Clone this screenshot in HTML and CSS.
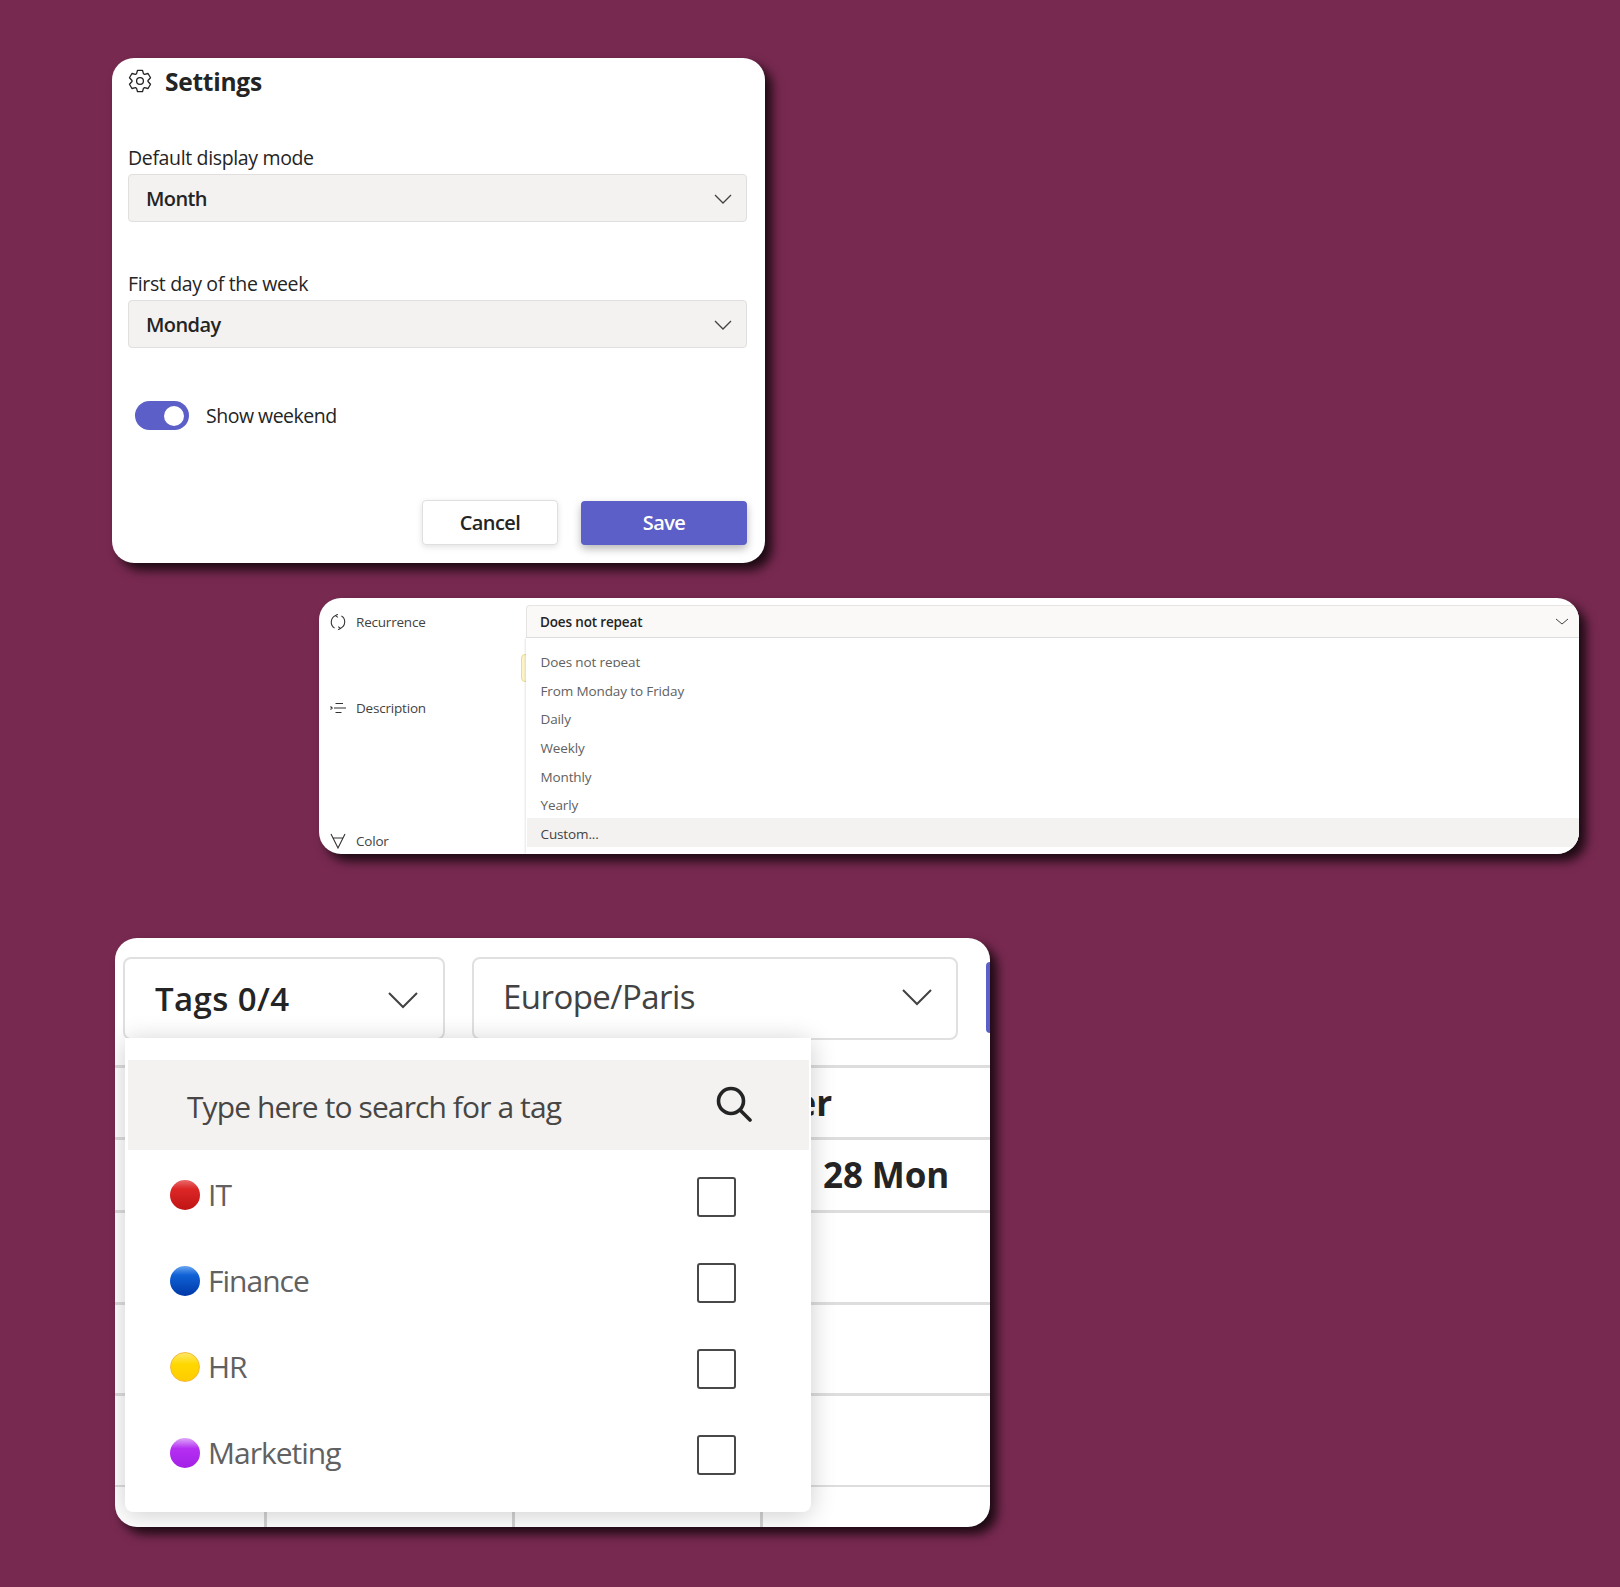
FILE: index.html
```html
<!DOCTYPE html>
<html lang="en">
<head>
    <meta charset="UTF-8">
    <title>Calendar settings</title>
    <link rel="stylesheet" href="styles.css">
</head>
<body>
    <section class="panel settings">
        <header class="settings-head">
            <svg class="gear" viewBox="0 0 24 24">
                <polygon points="9.53,1.29 14.47,1.29 15.5,4.81 16.47,5.37 20.04,4.5 22.52,8.78 19.98,11.44 19.98,12.56 22.52,15.22 20.04,19.5 16.47,18.63 15.5,19.19 14.47,22.71 9.53,22.71 8.49,19.19 7.53,18.63 3.96,19.5 1.48,15.22 4.02,12.56 4.02,11.44 1.48,8.78 3.96,4.5 7.53,5.37 8.49,4.81"/>
                <circle cx="12" cy="12" r="3.4"/>
            </svg>
            <h1>Settings</h1>
        </header>

        <div class="field field-mode">
            <label>Default display mode</label>
            <div class="select">
                <span>Month</span>
                <svg class="chevron chevron-md" viewBox="0 0 18 10"><polyline points="1,1 9,9 17,1"/></svg>
            </div>
        </div>

        <div class="field field-day">
            <label>First day of the week</label>
            <div class="select">
                <span>Monday</span>
                <svg class="chevron chevron-md" viewBox="0 0 18 10"><polyline points="1,1 9,9 17,1"/></svg>
            </div>
        </div>

        <div class="toggle-row">
            <div class="toggle"><div class="knob"></div></div>
            <span>Show weekend</span>
        </div>

        <div class="actions">
            <button class="btn btn-cancel">Cancel</button>
            <button class="btn btn-save">Save</button>
        </div>
    </section>

    <section class="panel recurrence">
        <div class="side">
            <div class="side-row row-recurrence">
                <svg class="side-icon" viewBox="0 0 16 16">
                    <path d="M5.8 1.6A7 7 0 0 0 4.6 14.1"/>
                    <path d="M10.2 14.4A7 7 0 0 0 11.4 1.9"/>
                    <path d="M7.8 0.2 5.6 1.6 7.8 3.4"/>
                    <path d="M8.2 12.6 10.4 14.4 8.2 15.8"/>
                </svg>
                <span>Recurrence</span>
            </div>
            <div class="side-row row-description">
                <svg class="side-icon" viewBox="0 0 16 16">
                    <path d="M0.5 6.5 2.2 8 0.5 9.5"/>
                    <path d="M5.5 3.5H13M4 8H16M5.5 12.5H11.5"/>
                </svg>
                <span>Description</span>
            </div>
            <div class="side-row row-color">
                <svg class="side-icon" viewBox="0 0 16 16">
                    <path d="M1 1 8 15 15 1M3 5H13"/>
                </svg>
                <span>Color</span>
            </div>
        </div>

        <div class="note"></div>

        <div class="repeat">
            <div class="repeat-select">
                <span>Does not repeat</span>
                <svg class="chevron chevron-sm" viewBox="0 0 14 7"><polyline points="1,1 7,6 13,1"/></svg>
            </div>
            <ul class="repeat-menu">
                <li class="clipped">Does not repeat</li>
                <li>From Monday to Friday</li>
                <li>Daily</li>
                <li>Weekly</li>
                <li>Monthly</li>
                <li>Yearly</li>
                <li class="hovered">Custom...</li>
            </ul>
        </div>
    </section>

    <section class="panel tags">
        <div class="toolbar">
            <div class="drop drop-tags">
                <span>Tags 0/4</span>
                <svg class="chevron chevron-lg" viewBox="0 0 30 17"><polyline points="1,1 15,15 29,1"/></svg>
            </div>
            <div class="drop drop-zone">
                <span>Europe/Paris</span>
                <svg class="chevron chevron-lg" viewBox="0 0 30 17"><polyline points="1,1 15,15 29,1"/></svg>
            </div>
            <div class="toolbar-btn"></div>
        </div>

        <div class="cal">
            <div class="cal-row cal-month">October</div>
            <div class="cal-row cal-day">28 Mon</div>
            <div class="cal-row cal-slot"></div>
            <div class="cal-row cal-slot"></div>
            <div class="cal-row cal-slot"></div>
            <div class="cal-foot">
                <div></div><div></div><div></div><div></div>
            </div>
        </div>

        <div class="tag-popup">
            <div class="tag-search">
                <span>Type here to search for a tag</span>
                <svg class="search-icon" viewBox="0 0 36 36">
                    <circle cx="15" cy="15" r="12.5"/>
                    <path d="M24 24 34 34"/>
                </svg>
            </div>
            <div class="tag-row">
                <div class="tag-name"><i class="dot dot-red"></i>IT</div>
                <div class="check"></div>
            </div>
            <div class="tag-row">
                <div class="tag-name"><i class="dot dot-blue"></i>Finance</div>
                <div class="check"></div>
            </div>
            <div class="tag-row">
                <div class="tag-name"><i class="dot dot-yellow"></i>HR</div>
                <div class="check"></div>
            </div>
            <div class="tag-row">
                <div class="tag-name"><i class="dot dot-purple"></i>Marketing</div>
                <div class="check"></div>
            </div>
        </div>
    </section>
</body>
</html>
```

FILE: styles.css
```css
* {
    box-sizing: border-box;
}

body {
    margin: 0;
    padding-top: 58px;
    height: 1587px;
    overflow: hidden;
    background-color: #782950;
    font-family: "Open Sans", "Noto Sans", sans-serif;
    color: #242424;
}

.panel {
    background-color: #ffffff;
    border-radius: 22px;
    box-shadow: 7px 7px 11px rgba(0, 0, 0, 0.78);
}

.chevron {
    display: block;
    fill: none;
    stroke: #424242;
    flex-shrink: 0;
}

.chevron-md {
    width: 18px;
    height: 10px;
    margin-top: 1px;
    stroke-width: 1.3;
}

.chevron-sm {
    width: 14px;
    height: 7px;
    stroke-width: 1;
}

.chevron-lg {
    width: 30px;
    height: 17px;
    margin-top: 4px;
    stroke-width: 2;
}

/* settings card */

.settings {
    width: 653px;
    height: 505px;
    margin-left: 112px;
    padding: 8px 18px 0 16px;
}

.settings-head {
    display: flex;
    align-items: center;
    height: 30px;
}

.gear {
    width: 24px;
    height: 24px;
    margin-right: 13px;
    fill: none;
    stroke: #242424;
    stroke-width: 1.3;
    stroke-linejoin: round;
}

h1 {
    margin: 0;
    font-size: 24.5px;
    font-weight: 700;
    letter-spacing: -0.25px;
}

.field-mode {
    margin-top: 51px;
}

.field-day {
    margin-top: 51px;
}

.field label {
    display: block;
    height: 27px;
    font-size: 19.5px;
    line-height: 21px;
    letter-spacing: -0.35px;
}

.select {
    display: flex;
    align-items: center;
    justify-content: space-between;
    width: 619px;
    height: 48px;
    padding: 0 14px 0 17px;
    background-color: #f3f2f1;
    border: 1px solid #e1dfdd;
    border-radius: 4px;
    font-size: 20px;
    font-weight: 600;
    letter-spacing: -0.6px;
}

.toggle-row {
    display: flex;
    align-items: center;
    gap: 17px;
    margin-top: 53px;
    margin-left: 7px;
    font-size: 19.5px;
    letter-spacing: -0.5px;
}

.toggle {
    display: flex;
    align-items: center;
    justify-content: flex-end;
    width: 54px;
    height: 29px;
    padding-right: 5px;
    background-color: #5b5fc7;
    border-radius: 15px;
}

.knob {
    width: 20px;
    height: 20px;
    background-color: #ffffff;
    border-radius: 50%;
}

.actions {
    display: flex;
    justify-content: flex-end;
    align-items: center;
    gap: 23px;
    margin-top: 70px;
}

.btn {
    border-radius: 4px;
    font-family: inherit;
    font-size: 20px;
    font-weight: 600;
    letter-spacing: -0.6px;
}

.btn-cancel {
    width: 136px;
    height: 45px;
    background-color: #ffffff;
    border: 1px solid #e1dfdd;
    color: #242424;
    box-shadow: 0 2px 6px rgba(0, 0, 0, 0.12);
}

.btn-save {
    width: 166px;
    height: 44px;
    background-color: #5b5fc7;
    border: none;
    color: #ffffff;
    box-shadow: 0 4px 8px rgba(0, 0, 0, 0.28);
}

/* recurrence card */

.recurrence {
    position: relative;
    display: flex;
    width: 1260px;
    height: 256px;
    margin-top: 35px;
    margin-left: 319px;
    overflow: hidden;
}

.side {
    width: 207px;
    padding-left: 11px;
    color: #424242;
    font-size: 13.5px;
    letter-spacing: -0.2px;
}

.side-row {
    display: flex;
    align-items: center;
    gap: 10px;
    height: 32px;
}

.row-recurrence {
    margin-top: 8px;
}

.row-description {
    margin-top: 54px;
}

.row-color {
    margin-top: 101px;
}

.side-icon {
    width: 16px;
    height: 16px;
    fill: none;
    stroke: #333333;
    stroke-width: 1.1;
}

.note {
    position: absolute;
    left: 202px;
    top: 56px;
    width: 10px;
    height: 28px;
    background-color: #fcf3c8;
    border: 1px solid #ecdc8e;
    border-radius: 4px;
}

.repeat {
    position: relative;
    flex: 1;
    display: flex;
    flex-direction: column;
    padding-top: 7px;
}

.repeat-select {
    display: flex;
    align-items: center;
    justify-content: space-between;
    height: 33px;
    padding: 0 10px 0 13px;
    background-color: #faf9f8;
    border: 1px solid #e6e4e2;
    border-right: none;
    border-radius: 4px 0 0 0;
    font-size: 13.5px;
    font-weight: 600;
    letter-spacing: -0.15px;
}

.repeat-menu {
    flex: 1;
    margin: 0;
    padding: 8px 0 0;
    list-style: none;
    background-color: #ffffff;
    box-shadow: -1px 0 2px rgba(0, 0, 0, 0.1);
    color: #616161;
    font-size: 13.5px;
    letter-spacing: -0.12px;
}

.repeat-menu li {
    height: 28.7px;
    padding-left: 14.5px;
    line-height: 32px;
}

.repeat-menu .clipped {
    height: 21px;
    margin-bottom: 7.7px;
    overflow: hidden;
}

.repeat-menu .hovered {
    margin-left: 1px;
    padding-left: 13.5px;
    background-color: #f3f2f1;
    color: #424242;
}

/* tags card */

.tags {
    position: relative;
    width: 875px;
    height: 589px;
    margin-top: 84px;
    margin-left: 115px;
    overflow: hidden;
}

.toolbar {
    display: flex;
    align-items: flex-start;
    padding: 19px 0 0 8px;
}

.drop {
    display: flex;
    align-items: center;
    justify-content: space-between;
    flex-shrink: 0;
    height: 83px;
    background-color: #ffffff;
    border: 2px solid #e0e0e0;
    border-radius: 8px;
    font-size: 33px;
}

.drop-tags {
    width: 322px;
    padding: 0 25px 0 30px;
    font-weight: 600;
    letter-spacing: 0.4px;
}

.drop-zone {
    width: 486px;
    margin-left: 27px;
    padding: 0 24px 6px 29px;
    color: #424242;
    letter-spacing: -0.55px;
}

.drop-zone span {
    margin-top: 2px;
}

.toolbar-btn {
    width: 40px;
    height: 71px;
    margin-top: 5px;
    margin-left: 28px;
    background-color: #5b5fc7;
    border-radius: 4px;
    flex-shrink: 0;
}

.cal {
    margin-top: 25px;
}

.cal-row {
    border-top: 3px solid #dddddd;
    font-size: 35px;
    font-weight: 700;
    letter-spacing: -0.1px;
}

.cal-month {
    width: 100%;
    height: 72px;
    padding-right: 158px;
    line-height: 70px;
    text-align: right;
}

.cal-day {
    height: 73px;
    padding-left: 708px;
    line-height: 70px;
}

.cal-slot {
    height: 91.5px;
}

.cal-foot {
    display: grid;
    grid-template-columns: 152px 248px 248px 1fr;
    height: 45px;
    border-top: 2px solid #dddddd;
}

.cal-foot div {
    border-right: 3px solid #d4d4d4;
}

.cal-foot div:last-child {
    border-right: none;
}

/* tag popup, lies over the calendar */

.tag-popup {
    position: absolute;
    left: 10px;
    top: 100px;
    width: 686px;
    height: 474px;
    padding: 22px 2px 0 3px;
    background-color: #ffffff;
    border-radius: 0 0 8px 8px;
    box-shadow: 0 3px 26px rgba(0, 0, 0, 0.2);
}

.tag-search {
    display: flex;
    align-items: center;
    justify-content: space-between;
    height: 90px;
    padding: 0 57px 0 59px;
    margin-bottom: 4px;
    background-color: #f3f2f1;
    color: #484644;
    font-size: 30px;
    letter-spacing: -0.9px;
}

.tag-search span {
    margin-top: 2px;
}

.search-icon {
    width: 36px;
    height: 36px;
    margin-bottom: 3px;
    fill: none;
    stroke: #242424;
    stroke-width: 3.6;
    stroke-linecap: round;
}

.tag-row {
    display: flex;
    align-items: center;
    justify-content: space-between;
    height: 86px;
    padding: 0 73px 0 42px;
}

.tag-name {
    display: flex;
    align-items: center;
    gap: 8px;
    margin-bottom: 5px;
    color: #616161;
    font-size: 30px;
    letter-spacing: -1px;
}

.dot {
    display: block;
    width: 30px;
    height: 30px;
    border-radius: 50%;
}

.dot-red {
    background: linear-gradient(#ea6a6a 0%, #dc2626 30%, #c01414 100%);
}

.dot-blue {
    background: linear-gradient(#6aa6f0 0%, #0f62d6 30%, #0038a8 100%);
}

.dot-yellow {
    background: linear-gradient(#ffe766 0%, #ffd800 40%, #ffcc00 100%);
    border: 1px solid #f4b93a;
}

.dot-purple {
    background: linear-gradient(#dda8f8 0%, #b52ff2 35%, #a320e6 100%);
}

.check {
    width: 39px;
    height: 40px;
    border: 2px solid #484848;
    border-radius: 3px;
}
```
